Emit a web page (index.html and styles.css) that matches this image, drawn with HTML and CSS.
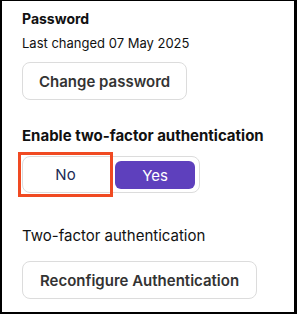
FILE: index.html
```html
<!DOCTYPE html>
<html lang="en">

<head>
    <meta charset="UTF-8">
    <meta name="viewport" content="width=device-width, initial-scale=1.0">
    <title>Security</title>
    <link rel="stylesheet" href="styles.css">
</head>

<body>
    <div class="panel">
        <section class="block">
            <h3 class="title">Password</h3>
            <p class="note">Last changed 07 May 2025</p>
            <button class="btn">Change password</button>
        </section>

        <section class="block two-factor">
            <h3 class="title big">Enable two-factor authentication</h3>
            <div class="toggle">
                <button class="opt focus">No</button>
                <button class="opt active">Yes</button>
            </div>
        </section>

        <section class="block reconf">
            <p class="label">Two-factor authentication</p>
            <button class="btn wide">Reconfigure Authentication</button>
        </section>
    </div>
</body>

</html>
```

FILE: styles.css
```css
* {
    margin: 0;
    padding: 0;
    box-sizing: border-box;
}

body {
    font-family: Inter, "Liberation Sans", sans-serif;
    color: #111;
    background: #fff;
}

.panel {
    width: 297px;
    height: 314px;
    border-style: solid;
    border-color: #000;
    border-width: 1px 3px 2px 2px;
    padding: 9px 0 0 20px;
}

.title {
    font-size: 14px;
    font-weight: 700;
    line-height: 18px;
}

.title.big {
    font-size: 15px;
}

.note {
    margin-top: 7px;
    font-size: 13px;
    line-height: 16px;
}

.label {
    font-size: 15px;
    line-height: 18px;
}

.btn {
    display: block;
    margin-top: 11px;
    height: 38px;
    padding: 0 16px;
    border: 1px solid #dcdcdc;
    border-radius: 8px;
    background: #fff;
    color: #333;
    font-family: inherit;
    font-size: 15px;
    font-weight: 600;
}

.btn.wide {
    margin-top: 16px;
    padding: 0 17px;
}

.two-factor {
    margin-top: 27px;
}

.toggle {
    display: flex;
    width: 178px;
    height: 37px;
    margin-top: 11px;
    border: 1px solid #dcdcdc;
    border-radius: 8px;
    gap: 7px;
}

.opt {
    border: 0;
    background: transparent;
    color: #1c2a55;
    font-family: inherit;
    font-size: 15px;
}

.opt.focus {
    width: 85px;
    outline: 3px solid #f04a22;
    outline-offset: 2px;
}

.opt.active {
    width: 80px;
    margin: 4px 0 3px;
    border-radius: 6px;
    background: #5e40bd;
    color: #fff;
}

.reconf {
    margin-top: 34px;
}
```
